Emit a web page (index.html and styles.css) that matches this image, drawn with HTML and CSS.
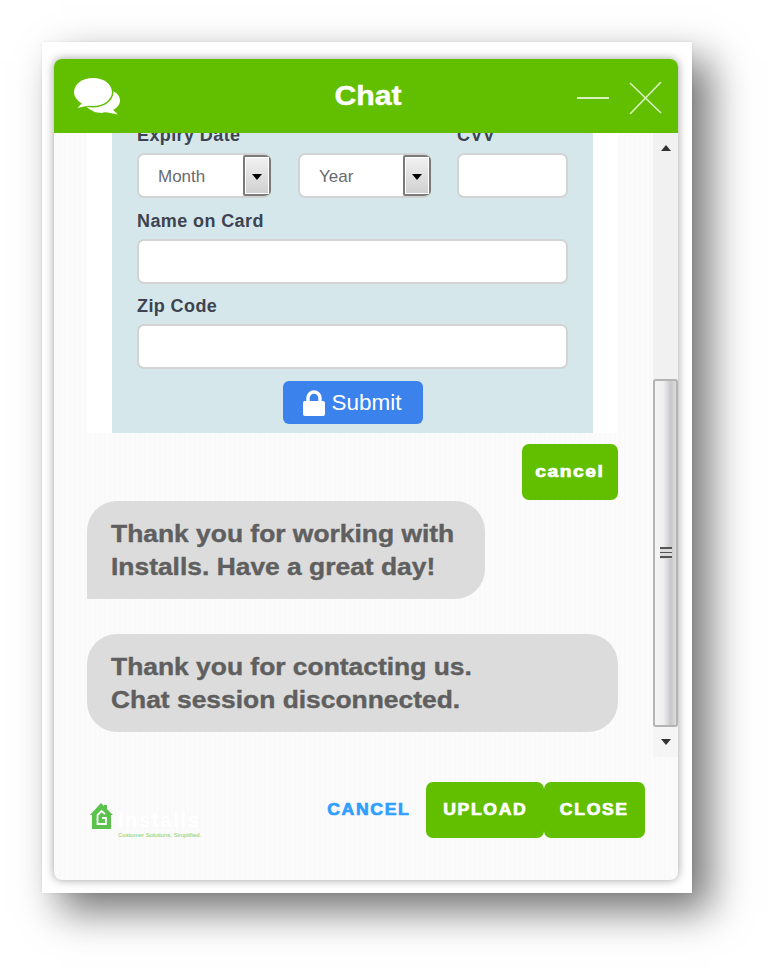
FILE: index.html
```html
<!DOCTYPE html>
<html lang="en">
<head>
    <meta charset="UTF-8">
    <title>Chat</title>
    <link rel="stylesheet" href="styles.css">
</head>
<body>

    <div class="frame">
        <div class="chat">

            <div class="chat-header">
                <svg class="chat-icon" width="46" height="37" viewBox="0 0 46 37">
                    <ellipse cx="28" cy="22.5" rx="18" ry="12" fill="#fff"/>
                    <path d="M38 31 L44 36.5 L31 34 Z" fill="#fff"/>
                    <path d="M24 32 L19 34 L30 35 Z" fill="#fff"/>
                    <ellipse cx="19" cy="14" rx="20.5" ry="15.5" fill="#62bf00"/>
                    <ellipse cx="19" cy="14" rx="19" ry="14" fill="#fff"/>
                    <path d="M9 24 L3.5 30 L17 27 Z" fill="#fff"/>
                </svg>
                <div class="chat-title"><span class="wide">Chat</span></div>
                <div class="window-buttons">
                    <svg width="32" height="4" viewBox="0 0 32 4">
                        <path d="M0 2 H32" stroke="#d9f0c0" stroke-width="2"/>
                    </svg>
                    <svg width="33" height="32" viewBox="0 0 33 32">
                        <path d="M1 1 L32 31 M32 0 L1 32" stroke="#d9f0c0" stroke-width="1.6" fill="none"/>
                    </svg>
                </div>
            </div>

            <div class="chat-body">
                <div class="messages">
                    <div class="card">
                        <div class="pay-form">
                            <div class="field-row">
                                <div class="field month">
                                    <label class="field-label">Expiry Date</label>
                                    <div class="select-box">
                                        <span class="select-text">Month</span>
                                        <span class="select-arrow"></span>
                                    </div>
                                </div>
                                <div class="field">
                                    <label class="field-label">&nbsp;</label>
                                    <div class="select-box">
                                        <span class="select-text">Year</span>
                                        <span class="select-arrow"></span>
                                    </div>
                                </div>
                                <div class="field">
                                    <label class="field-label">CVV</label>
                                    <div class="text-input"></div>
                                </div>
                            </div>
                            <label class="field-label spaced">Name on Card</label>
                            <div class="text-input"></div>
                            <label class="field-label spaced zip">Zip Code</label>
                            <div class="text-input"></div>
                            <button class="submit-button">
                                <svg width="22" height="26" viewBox="0 0 22 26">
                                    <path d="M5 12 V8 A6 6 0 0 1 17 8 V12" fill="none" stroke="#fff" stroke-width="3.4"/>
                                    <rect x="0" y="11" width="22" height="15" rx="2" fill="#fff"/>
                                </svg>
                                Submit
                            </button>
                        </div>
                    </div>

                    <div class="cancel-row">
                        <button class="green-button small"><span class="wide">cancel</span></button>
                    </div>

                    <div class="bubble first"><span class="bubble-text">Thank you for working with<br>Installs. Have a great day!</span></div>
                    <div class="bubble last"><span class="bubble-text">Thank you for contacting us.<br>Chat session disconnected.</span></div>
                </div>

                <div class="scrollbar">
                    <div class="scroll-step"><span class="arrow-up"></span></div>
                    <div class="scroll-track"></div>
                    <div class="scroll-thumb">
                        <div class="grip"></div>
                    </div>
                    <div class="scroll-step bottom"><span class="arrow-down"></span></div>
                </div>
            </div>

            <div class="chat-footer">
                <div class="logo">
                    <svg width="23" height="26" viewBox="0 0 23 26">
                        <path d="M11 0 L14 3 L14 2 L17 2 L17 6 L23 12 L21 12 L21 26 L2 26 L2 12 L0 12 Z" fill="#5cc24e"/>
                        <path d="M15 11 L11.500 8 L7.500 12 V21 H16 V15 H12" fill="none" stroke="#fbfbfb" stroke-width="1.800"/>
                    </svg>
                    <div class="logo-text">
                        <div class="logo-name">Installs</div>
                        <div class="logo-tag">Customer Solutions, Simplified.</div>
                    </div>
                </div>
                <div class="footer-actions">
                    <a class="text-link"><span class="wide">CANCEL</span></a>
                    <button class="green-button upload"><span class="wide">UPLOAD</span></button>
                    <button class="green-button close"><span class="wide">CLOSE</span></button>
                </div>
            </div>

        </div>
    </div>

</body>
</html>
```

FILE: styles.css
```css
/* Base styling */
body {
    margin: 0;
    height: 978px;
    overflow: hidden;
    background-color: #fff;
    font-family: "Liberation Sans", Arial, sans-serif;
}

.frame {
    box-sizing: border-box;
    width: 650px;
    height: 851px;
    margin: 42px 0 0 42px;
    padding: 17px 14px 13px 12px;
    background-color: #fff;
    box-shadow: 18px 18px 38px rgba(0, 0, 0, 0.55), 0 0 3px rgba(0, 0, 0, 0.08);
}

.chat {
    display: flex;
    flex-direction: column;
    height: 821px;
    border-radius: 8px;
    overflow: hidden;
    background-color: #fbfbfb;
    background-image: repeating-linear-gradient(90deg, rgba(0, 0, 0, 0.006) 0 2px, transparent 2px 5px);
    box-shadow: 0 0 10px rgba(0, 0, 0, 0.38);
}

/* The lettering in this design is wider than any installed face */
.wide {
    display: inline-block;
    transform: scaleX(1.1);
}

/* Header */
.chat-header {
    flex: none;
    display: grid;
    grid-template-columns: 1fr auto 1fr;
    align-items: center;
    position: relative;
    z-index: 1;
    height: 74px;
    padding: 0 16px 0 20px;
    background-color: #62bf00;
}

.chat-title {
    color: #fff;
    font-size: 27px;
    font-weight: 700;
    -webkit-text-stroke: 0.4px #fff;
}

.chat-title .wide {
    transform: scaleX(1.12);
}

.window-buttons {
    display: flex;
    align-items: center;
    justify-content: flex-end;
    gap: 20px;
    padding-top: 3px;
}

/* Message area */
.chat-body {
    flex: none;
    display: flex;
    height: 624px;
    overflow: hidden;
}

.messages {
    flex: 1;
    padding: 0 35px 0 33px;
}

.card {
    margin-top: -9px;
    padding: 0 25px;
    background-color: #fff;
}

.pay-form {
    padding: 0 25px 9px;
    background-color: #d5e7ea;
}

.field-row {
    display: grid;
    grid-template-columns: 135px 133px 111px;
    column-gap: 26px;
}

.field.month {
    margin-right: 1px;
}

.field-label {
    display: block;
    height: 22px;
    margin-bottom: 7px;
    color: #3d4350;
    font-size: 18px;
    font-weight: 700;
    line-height: 22px;
    letter-spacing: 0.4px;
}

.field-label.spaced {
    margin-top: 12px;
}

.field-label.zip {
    margin-top: 11px;
}

.text-input, .select-box {
    box-sizing: border-box;
    height: 45px;
    border: 2px solid #d2d4d4;
    border-radius: 7px;
    background-color: #fff;
}

.select-box {
    display: flex;
    justify-content: space-between;
    overflow: hidden;
    border-right: none;
}

.select-text {
    padding-left: 19px;
    color: #6a6a72;
    font-size: 17px;
    line-height: 43px;
}

.select-arrow {
    box-sizing: border-box;
    position: relative;
    width: 28px;
    border: 2px solid #7a7a7a;
    border-radius: 2px;
    background: linear-gradient(#f2f2f2, #cfcfcf);
    box-shadow: inset 0 0 0 1px #fff;
}

.select-arrow::after {
    content: "";
    position: absolute;
    top: 17px;
    left: 7px;
    border-top: 6px solid #000;
    border-left: 5px solid transparent;
    border-right: 5px solid transparent;
}

.submit-button {
    display: flex;
    align-items: center;
    justify-content: center;
    gap: 6px;
    width: 140px;
    height: 43px;
    margin: 12px auto 0;
    border: none;
    border-radius: 6px;
    background-color: #3b82ec;
    color: #fff;
    font-family: inherit;
    font-size: 22.5px;
}

.cancel-row {
    display: flex;
    justify-content: flex-end;
    margin-top: 11px;
}

.green-button {
    height: 56px;
    border: none;
    border-radius: 7px;
    background-color: #62bf00;
    color: #fff;
    font-family: inherit;
    font-size: 16px;
    font-weight: 700;
    letter-spacing: 1.5px;
    -webkit-text-stroke: 0.7px #fff;
}

.green-button.small {
    width: 96px;
    letter-spacing: 1.3px;
}

.green-button.small .wide {
    transform: scaleX(1.2);
}

/* Chat bubbles */
.bubble {
    box-sizing: border-box;
    height: 98px;
    padding: 16px 24px;
    background-color: #dcdcdc;
    border-radius: 30px;
    color: #5f5f5f;
    font-size: 24px;
    font-weight: 700;
    line-height: 33px;
    -webkit-text-stroke: 0.4px #5f5f5f;
}

.bubble-text {
    display: inline-block;
    transform: scaleX(1.1);
    transform-origin: left;
}

.bubble.first {
    width: 398px;
    margin-top: 1px;
    border-bottom-left-radius: 0;
}

.bubble.last {
    margin-top: 35px;
}

/* Scrollbar */
.scrollbar {
    flex: none;
    display: flex;
    flex-direction: column;
    width: 26px;
    background-color: #f1f1f1;
}

.scroll-step {
    display: flex;
    align-items: center;
    justify-content: center;
    height: 30px;
}

.scroll-step.bottom {
    background-color: #f5f5f5;
}

.arrow-up {
    border-bottom: 6px solid #333;
    border-left: 5px solid transparent;
    border-right: 5px solid transparent;
}

.arrow-down {
    border-top: 6px solid #333;
    border-left: 5px solid transparent;
    border-right: 5px solid transparent;
}

.scroll-track {
    height: 216px;
}

.scroll-thumb {
    box-sizing: border-box;
    display: flex;
    align-items: center;
    justify-content: center;
    height: 348px;
    margin-right: 1px;
    border: 2px solid #b4b4b4;
    border-radius: 3px;
    background: linear-gradient(90deg, #f5f5f5, #efefef 40%, #c8c8cc 75%, #dedede);
}

.grip {
    width: 12px;
    height: 12px;
    background: repeating-linear-gradient(#555 0 1.5px, #dcdcdc 1.5px 4.5px);
}

/* Footer */
.chat-footer {
    flex: none;
    display: flex;
    justify-content: space-between;
    padding: 25px 33px 0 36px;
}

.logo {
    display: flex;
    align-items: flex-start;
    gap: 5px;
    margin-top: 21px;
}

.logo-text {
    margin-top: 6px;
}

.logo-name {
    color: #fff;
    font-size: 20px;
    font-weight: 700;
    line-height: 23px;
    letter-spacing: 1.7px;
}

.logo-tag {
    color: #7ccf70;
    font-size: 6px;
    line-height: 6px;
    white-space: nowrap;
}

.footer-actions {
    display: flex;
    align-items: center;
}

.text-link {
    margin-right: 19px;
    color: #2f9fff;
    font-size: 16px;
    font-weight: 700;
    letter-spacing: 1.5px;
    -webkit-text-stroke: 0.7px #2f9fff;
}

.green-button.upload {
    width: 118px;
}

.green-button.close {
    width: 101px;
}
```
